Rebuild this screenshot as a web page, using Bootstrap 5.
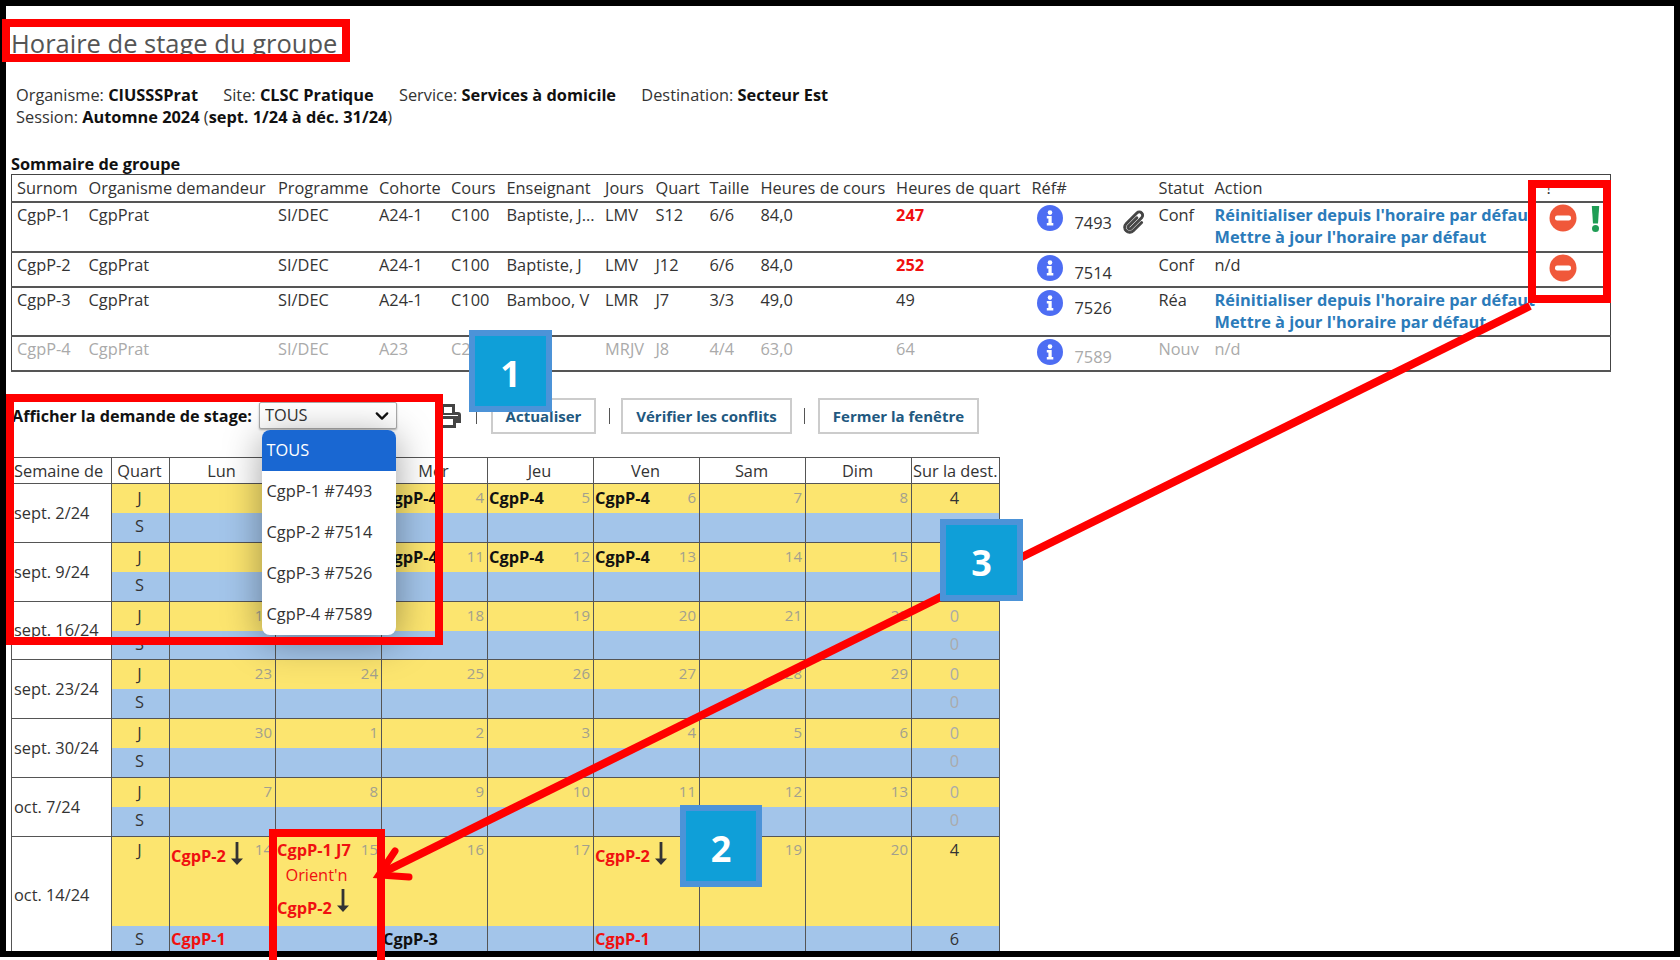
<!DOCTYPE html>
<html lang="fr">
<head>
<meta charset="utf-8">
<title>Horaire de stage du groupe</title>
<link href="https://cdn.jsdelivr.net/npm/bootstrap@5.3.0/dist/css/bootstrap.min.css" rel="stylesheet">
<style>
html,body{height:960px;overflow:hidden;background:#fff}
body{font-family:"Open Sans","Noto Sans",sans-serif;font-size:16.35px;color:#333;line-height:22px}
.sheet{position:relative;width:1680px;height:960px;overflow:hidden;padding:26px 0 0 11px}
.page-title{font-family:"Open Sans",sans-serif;font-size:25.5px;line-height:34px;font-weight:400;color:#555;margin:0 0 24px}
.info-block{padding-left:5px}
.info-block b{color:#111}
.info-gap{gap:25.3px}
.sum-title{font-weight:700;color:#111;line-height:20px;margin-top:26px}
.sum-table{width:1599px;table-layout:fixed;border:1px solid #444;border-collapse:collapse;margin:0;--bs-table-bg:transparent;--bs-table-color:#333}
.sum-table>*>tr>*{padding:1px 0 0 5px;border-bottom:2px solid #555;white-space:nowrap;font-weight:400;vertical-align:top;overflow:visible}
.sum-table>thead>tr>th{padding-top:2px}
.sum-table>thead>tr{height:27px}
.r-a{height:50px}.r-b{height:35px}.r-c{height:49px}
.c1{width:72px}.c2{width:189.5px}.c3{width:101px}.c4{width:72px}.c5{width:55.5px}.c6{width:98.6px}.c7{width:50.4px}.c8{width:54px}.c9{width:51px}.c10{width:135.6px}.c11{width:135.4px}.c12{width:127px}.c13{width:56px}.c14{width:332px}.c15{width:69px}
.sum-table a{display:block;font-weight:700;color:#2b7bba;text-decoration:none;line-height:22.5px}
.sum-table>tbody>tr>td.hot{color:#f01010;font-weight:700}
.muted-row>*{color:#aaa!important}
.ref-wrap{padding-left:6px}
.ico-info{width:26px;height:26px;flex:none;margin-top:1px}
.ref-no{margin:8px 0 0 11px;width:39px}
.ico-clip{width:27px;height:27px;margin:5px 0 0 8px;flex:none}
.ico-stop{width:28px;height:28px;margin:0 0 0 3px;flex:none}
.ico-bang{width:9px;height:26px;margin:2px 0 0 14px;flex:none}
.filter-row{height:36px;margin:26px 0 23px 1px}
.filter-label{font-weight:700;color:#111;font-size:16.2px;margin-right:7px}
.pick{width:138px;height:27px;padding:0 0 0 5px;font-size:16.35px;line-height:25px;color:#333;border:1px solid #aaa;border-radius:2px;box-shadow:0 1px 2px rgba(0,0,0,.3);background-image:url("data:image/svg+xml,%3csvg xmlns='http://www.w3.org/2000/svg' viewBox='0 0 16 16'%3e%3cpath fill='none' stroke='%23111' stroke-linecap='round' stroke-linejoin='round' stroke-width='2.6' d='m2 5 6 6 6-6'/%3e%3c/svg%3e");background-position:right 6px center;background-size:16px 14px;font-family:inherit}
.ico-print{width:26px;height:24px;margin-left:38px;flex:none}
.pipe{width:1px;height:16px;background:#555;flex:none;margin-top:1px}
.pipe-a{margin-left:15px}.pipe-b{margin-left:13px}.pipe-c{margin-left:12px}
.act{height:36px;border:2px solid #ccc;border-radius:0;padding:0;font-size:15px;font-weight:700;color:#21587f;background:#fff;line-height:32px}
.act-a{width:105px;margin-left:14px}.act-b{width:171px;margin-left:11px}.act-c{width:161px;margin-left:13px}
.grid-table{width:988px;table-layout:fixed;border-collapse:collapse;margin:0;--bs-table-bg:transparent;--bs-table-color:#333}
.g1{width:100px}.g2{width:58px}.g3{width:106px}.g4{width:88px}
.grid-table>*>tr>*{border:1px solid #555;padding:0 3px 0 1px;font-weight:400;white-space:nowrap;line-height:22px}
.grid-table>thead>tr>th{height:26px;padding-top:2px;text-align:center;vertical-align:top}
.grid-table>thead>tr>th.wk-h{text-align:left;padding-left:2px}
.grid-table>tbody>tr>td{vertical-align:top;padding-top:3px;border-bottom-width:0;border-top-width:0}
.grid-table>tbody>tr.jr>td{background:#fce56f;height:30px;border-top:1px solid #555}
.grid-table>tbody>tr.sr>td{background:#a3c5ea;height:29px;padding-top:2px}
.grid-table>tbody>tr.sr.thin>td{height:28px}
.grid-table>tbody>tr>td.wk{background:#fff;vertical-align:middle;padding:0 0 0 2px;border-top:1px solid #555}
.grid-table>tbody>tr>td.ctr{text-align:center}
.grid-table b{color:#111}
.grid-table>tbody>tr>td.zero{color:#aaa}
.dn{float:right;color:#a2a08e;font-size:15px;line-height:20px}
.grid-table>tbody>tr.tall>td{height:90px;padding-top:2px}
.grid-table>tbody>tr.last>td{height:25px}
.grid-table b.rd,.rd{color:#f01010}
.orient{text-align:center;margin-top:3px;padding-right:22px}
.tall-b{display:flex;align-items:flex-start;margin-top:11px}
.ico-down{width:12px;height:23px;margin-left:5px;flex:none}
.tall-a{padding-top:6px;display:inline-flex;align-items:flex-start}
.tall-a .ico-down{margin-top:-3px}
.tall-b .ico-down{margin-top:-8px}
.menu-open{position:absolute;left:261.5px;top:430px;width:134.5px;min-width:0;height:205px;padding:0;margin:0;border:0;border-radius:8px;overflow:hidden;box-shadow:0 6px 38px rgba(0,0,0,.38);display:block;z-index:5;background:#fff}
.menu-open .dropdown-item{height:41px;padding:0 0 0 5px;line-height:41px;font-size:16.35px;color:#333}
.menu-open .dropdown-item.active{background:#1967d2;color:#fff}
.frame{position:absolute;left:0;top:0;width:1680px;height:957px;border:6px solid #000;z-index:6;pointer-events:none}
.strip{position:absolute;left:0;top:957px;width:1680px;height:3px;background:#fff;z-index:6}
.ray{position:absolute;left:0;top:0;width:1680px;height:960px;z-index:7;pointer-events:none}
.hl{position:absolute;border:8px solid #f00;z-index:8;pointer-events:none}
.hl-1{left:2px;top:19px;width:348px;height:43px}
.hl-2{left:6px;top:394px;width:437px;height:251px}
.hl-3{left:1528px;top:180px;width:83px;height:123px}
.hl-4{left:269px;top:829px;width:116px;height:140px}
.tag{position:absolute;width:83px;height:82px;padding-top:5px;background:#0f9fd8;border:6px solid #4c93d8;color:#fff;font-weight:700;font-size:36px;line-height:1;z-index:9}
.tag-1{left:469px;top:330px}
.tag-2{left:680px;top:805px;width:82px}
.tag-3{left:940px;top:519px}
</style>
</head>
<body>
<svg class="d-none" xmlns="http://www.w3.org/2000/svg">
<symbol id="s-info" viewBox="0 0 26 26"><circle cx="13" cy="13" r="13" fill="#4d6df3"/><circle cx="13" cy="7.6" r="2.3" fill="#fff"/><path d="M9.8 11h4.9v7h1.6v2.4H9.8V18h1.6v-4.6H9.8z" fill="#fff"/></symbol>
<symbol id="s-stop" viewBox="0 0 28 28"><circle cx="14" cy="14" r="13.5" fill="#f0583a"/><rect x="6" y="11.5" width="16" height="5" rx="2.2" fill="#fff"/></symbol>
<symbol id="s-down" viewBox="0 0 12 23"><path d="M4.6 0h2.8v16.5H12L6 23 0 16.5h4.6z" fill="#333"/></symbol>
</svg>
<div class="sheet">
  <h1 class="page-title">Horaire de stage du groupe</h1>
  <div class="info-block">
    <div class="d-flex info-gap"><span>Organisme: <b>CIUSSSPrat</b></span><span>Site: <b>CLSC Pratique</b></span><span>Service: <b>Services à domicile</b></span><span>Destination: <b>Secteur Est</b></span></div>
    <div>Session: <b>Automne 2024</b> (<b>sept. 1/24 à déc. 31/24</b>)</div>
  </div>
  <div class="sum-title">Sommaire de groupe</div>
  <table class="table sum-table">
    <colgroup><col class="c1"><col class="c2"><col class="c3"><col class="c4"><col class="c5"><col class="c6"><col class="c7"><col class="c8"><col class="c9"><col class="c10"><col class="c11"><col class="c12"><col class="c13"><col class="c14"><col class="c15"></colgroup>
    <thead><tr><th>Surnom</th><th>Organisme demandeur</th><th>Programme</th><th>Cohorte</th><th>Cours</th><th>Enseignant</th><th>Jours</th><th>Quart</th><th>Taille</th><th>Heures de cours</th><th>Heures de quart</th><th>Réf#</th><th>Statut</th><th>Action</th><th>!</th></tr></thead>
    <tbody>
      <tr class="r-a"><td>CgpP-1</td><td>CgpPrat</td><td>SI/DEC</td><td>A24-1</td><td>C100</td><td>Baptiste, J...</td><td>LMV</td><td>S12</td><td>6/6</td><td>84,0</td><td class="hot">247</td>
        <td><div class="d-flex ref-wrap"><svg class="ico-info"><use href="#s-info"/></svg><span class="ref-no">7493</span><svg class="ico-clip" viewBox="0 0 16 16"><path transform="rotate(45 8 8)" fill="#444" stroke="#444" stroke-width=".7" d="M4.5 3a2.5 2.5 0 0 1 5 0v9a1.5 1.5 0 0 1-3 0V5a.5.5 0 0 1 1 0v7a.5.5 0 0 0 1 0V3a1.5 1.5 0 1 0-3 0v9a2.5 2.5 0 0 0 5 0V5a.5.5 0 0 1 1 0v7a3.5 3.5 0 1 1-7 0V3z"/></svg></div></td>
        <td>Conf</td><td><a href="#">Réinitialiser depuis l'horaire par défaut</a><a href="#">Mettre à jour l'horaire par défaut</a></td>
        <td><div class="d-flex"><svg class="ico-stop"><use href="#s-stop"/></svg><svg class="ico-bang" viewBox="0 0 9 26"><path d="M.8 0h7.4L7 17.5H2z" fill="#1f9d55"/><circle cx="4.5" cy="22.5" r="3.5" fill="#1f9d55"/></svg></div></td></tr>
      <tr class="r-b"><td>CgpP-2</td><td>CgpPrat</td><td>SI/DEC</td><td>A24-1</td><td>C100</td><td>Baptiste, J</td><td>LMV</td><td>J12</td><td>6/6</td><td>84,0</td><td class="hot">252</td>
        <td><div class="d-flex ref-wrap"><svg class="ico-info"><use href="#s-info"/></svg><span class="ref-no">7514</span></div></td>
        <td>Conf</td><td>n/d</td><td><div class="d-flex"><svg class="ico-stop"><use href="#s-stop"/></svg></div></td></tr>
      <tr class="r-c"><td>CgpP-3</td><td>CgpPrat</td><td>SI/DEC</td><td>A24-1</td><td>C100</td><td>Bamboo, V</td><td>LMR</td><td>J7</td><td>3/3</td><td>49,0</td><td>49</td>
        <td><div class="d-flex ref-wrap"><svg class="ico-info"><use href="#s-info"/></svg><span class="ref-no">7526</span></div></td>
        <td>Réa</td><td><a href="#">Réinitialiser depuis l'horaire par défaut</a><a href="#">Mettre à jour l'horaire par défaut</a></td><td></td></tr>
      <tr class="r-b muted-row"><td>CgpP-4</td><td>CgpPrat</td><td>SI/DEC</td><td>A23</td><td>C2</td><td></td><td>MRJV</td><td>J8</td><td>4/4</td><td>63,0</td><td>64</td>
        <td><div class="d-flex ref-wrap"><svg class="ico-info"><use href="#s-info"/></svg><span class="ref-no">7589</span></div></td>
        <td>Nouv</td><td>n/d</td><td></td></tr>
    </tbody>
  </table>

  <div class="d-flex align-items-center filter-row">
    <span class="filter-label">Afficher la demande de stage:</span>
    <select class="form-select pick" aria-label="Afficher la demande de stage"><option>TOUS</option></select>
    <svg class="ico-print" viewBox="0 0 26 24"><path fill="#444" fill-rule="evenodd" d="M6 0h14v8h3a3 3 0 0 1 3 3v8h-5v5H5v-5H0v-8a3 3 0 0 1 3-3h3zm3 3v6h8V3zM8 15v6h10v-6zM3 11v1h20v-1z"/></svg>
    <span class="pipe pipe-a"></span>
    <button type="button" class="btn act act-a">Actualiser</button>
    <span class="pipe pipe-b"></span>
    <button type="button" class="btn act act-b">Vérifier les conflits</button>
    <span class="pipe pipe-c"></span>
    <button type="button" class="btn act act-c">Fermer la fenêtre</button>
  </div>

  <table class="table grid-table">
    <colgroup><col class="g1"><col class="g2"><col class="g3"><col class="g3"><col class="g3"><col class="g3"><col class="g3"><col class="g3"><col class="g3"><col class="g4"></colgroup>
    <thead><tr><th class="wk-h">Semaine de</th><th>Quart</th><th>Lun</th><th></th><th>Mer</th><th>Jeu</th><th>Ven</th><th>Sam</th><th>Dim</th><th>Sur la dest.</th></tr></thead>
    <tbody>
      <tr class="jr"><td class="wk" rowspan="2">sept. 2/24</td><td class="ctr">J</td><td></td><td></td><td><span class="dn">4</span><b>CgpP-4</b></td><td><span class="dn">5</span><b>CgpP-4</b></td><td><span class="dn">6</span><b>CgpP-4</b></td><td><span class="dn">7</span></td><td><span class="dn">8</span></td><td class="ctr">4</td></tr>
      <tr class="sr"><td class="ctr">S</td><td></td><td></td><td></td><td></td><td></td><td></td><td></td><td class="ctr zero"></td></tr>
      <tr class="jr"><td class="wk" rowspan="2">sept. 9/24</td><td class="ctr">J</td><td></td><td></td><td><span class="dn">11</span><b>CgpP-4</b></td><td><span class="dn">12</span><b>CgpP-4</b></td><td><span class="dn">13</span><b>CgpP-4</b></td><td><span class="dn">14</span></td><td><span class="dn">15</span></td><td class="ctr"></td></tr>
      <tr class="sr"><td class="ctr">S</td><td></td><td></td><td></td><td></td><td></td><td></td><td></td><td class="ctr zero"></td></tr>
      <tr class="jr"><td class="wk" rowspan="2">sept. 16/24</td><td class="ctr">J</td><td><span class="dn">16</span></td><td></td><td><span class="dn">18</span></td><td><span class="dn">19</span></td><td><span class="dn">20</span></td><td><span class="dn">21</span></td><td><span class="dn">22</span></td><td class="ctr zero">0</td></tr>
      <tr class="sr thin"><td class="ctr">S</td><td></td><td></td><td></td><td></td><td></td><td></td><td></td><td class="ctr zero">0</td></tr>
      <tr class="jr"><td class="wk" rowspan="2">sept. 23/24</td><td class="ctr">J</td><td><span class="dn">23</span></td><td><span class="dn">24</span></td><td><span class="dn">25</span></td><td><span class="dn">26</span></td><td><span class="dn">27</span></td><td><span class="dn">28</span></td><td><span class="dn">29</span></td><td class="ctr zero">0</td></tr>
      <tr class="sr"><td class="ctr">S</td><td></td><td></td><td></td><td></td><td></td><td></td><td></td><td class="ctr zero">0</td></tr>
      <tr class="jr"><td class="wk" rowspan="2">sept. 30/24</td><td class="ctr">J</td><td><span class="dn">30</span></td><td><span class="dn">1</span></td><td><span class="dn">2</span></td><td><span class="dn">3</span></td><td><span class="dn">4</span></td><td><span class="dn">5</span></td><td><span class="dn">6</span></td><td class="ctr zero">0</td></tr>
      <tr class="sr"><td class="ctr">S</td><td></td><td></td><td></td><td></td><td></td><td></td><td></td><td class="ctr zero">0</td></tr>
      <tr class="jr"><td class="wk" rowspan="2">oct. 7/24</td><td class="ctr">J</td><td><span class="dn">7</span></td><td><span class="dn">8</span></td><td><span class="dn">9</span></td><td><span class="dn">10</span></td><td><span class="dn">11</span></td><td><span class="dn">12</span></td><td><span class="dn">13</span></td><td class="ctr zero">0</td></tr>
      <tr class="sr"><td class="ctr">S</td><td></td><td></td><td></td><td></td><td></td><td></td><td></td><td class="ctr zero">0</td></tr>
      <tr class="jr tall"><td class="wk" rowspan="2">oct. 14/24</td><td class="ctr">J</td>
        <td><span class="dn">14</span><span class="tall-a"><b class="rd">CgpP-2</b><svg class="ico-down"><use href="#s-down"/></svg></span></td>
        <td><span class="dn">15</span><b class="rd">CgpP-1 J7</b><div class="orient rd">Orient'n</div><div class="tall-b"><b class="rd">CgpP-2</b><svg class="ico-down"><use href="#s-down"/></svg></div></td>
        <td><span class="dn">16</span></td><td><span class="dn">17</span></td>
        <td><span class="tall-a"><b class="rd">CgpP-2</b><svg class="ico-down"><use href="#s-down"/></svg></span></td>
        <td><span class="dn">19</span></td><td><span class="dn">20</span></td><td class="ctr">4</td></tr>
      <tr class="sr last"><td class="ctr">S</td><td><b class="rd">CgpP-1</b></td><td></td><td><b>CgpP-3</b></td><td></td><td><b class="rd">CgpP-1</b></td><td></td><td></td><td class="ctr">6</td></tr>
    </tbody>
  </table>

  <div class="dropdown-menu menu-open">
    <a class="dropdown-item active" href="#">TOUS</a>
    <a class="dropdown-item" href="#">CgpP-1 #7493</a>
    <a class="dropdown-item" href="#">CgpP-2 #7514</a>
    <a class="dropdown-item" href="#">CgpP-3 #7526</a>
    <a class="dropdown-item" href="#">CgpP-4 #7589</a>
  </div>

  <div class="frame"></div>
  <div class="strip"></div>
  <svg class="ray" viewBox="0 0 1680 960"><path d="M1530 306 380 874" stroke="#f00" stroke-width="8" fill="none"/><path d="M395 851 379 875 409 877" stroke="#f00" stroke-width="7" stroke-linecap="round" stroke-linejoin="miter" fill="none"/></svg>
  <div class="hl hl-1"></div>
  <div class="hl hl-2"></div>
  <div class="hl hl-3"></div>
  <div class="hl hl-4"></div>
  <div class="tag tag-1 d-flex align-items-center justify-content-center">1</div>
  <div class="tag tag-2 d-flex align-items-center justify-content-center">2</div>
  <div class="tag tag-3 d-flex align-items-center justify-content-center">3</div>
</div>
<script src="https://cdn.jsdelivr.net/npm/bootstrap@5.3.0/dist/js/bootstrap.bundle.min.js"></script>
</body>
</html>
